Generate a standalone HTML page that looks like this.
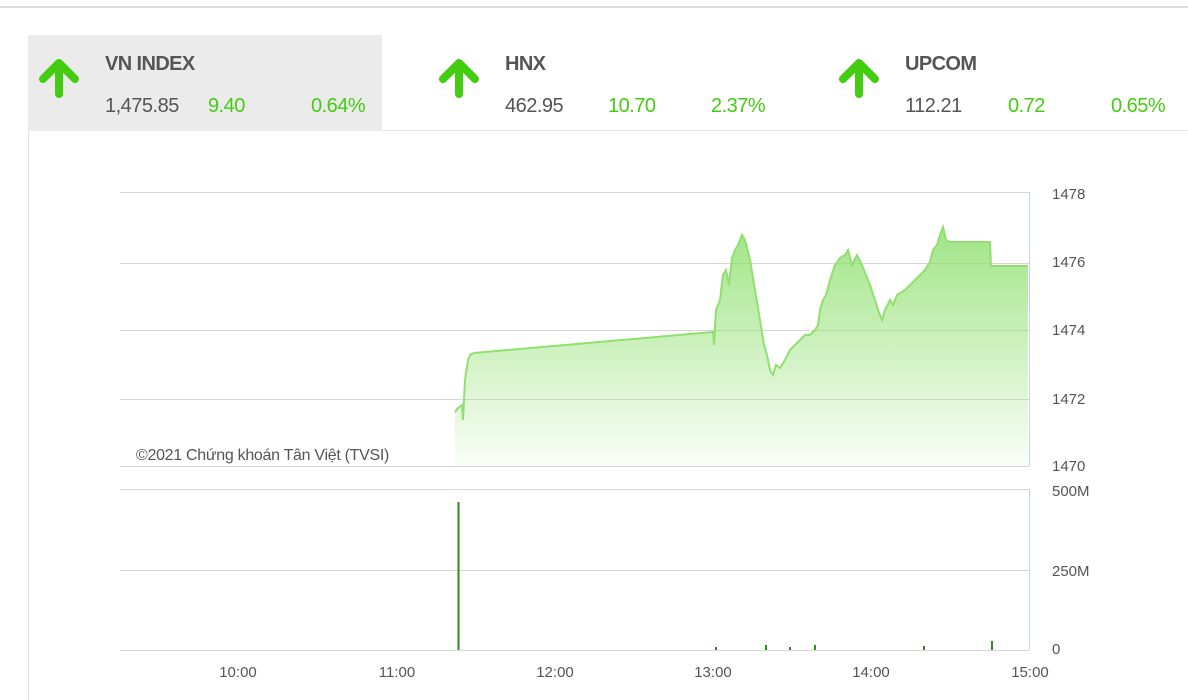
<!DOCTYPE html>
<html><head><meta charset="utf-8"><style>
html,body{margin:0;width:1188px;height:700px;background:#fff;font-family:"Liberation Sans",Arial,sans-serif;position:relative;overflow:hidden}
.top{position:absolute;left:0;top:6px;width:1188px;height:2px;background:#ddd}
.tab{position:absolute;top:35px;width:354px;height:96px}
.tab.a{background:#ebebeb}
.name{position:absolute;left:77px;top:18px;font-size:20px;font-weight:bold;color:#555;letter-spacing:-0.6px}
.v{position:absolute;top:60px;font-size:20px;color:#555;letter-spacing:-0.5px}
.g{color:#44cc11}
.panel{position:absolute;left:28px;top:130px;width:1170px;height:580px;border:1px solid #e4e4e4;box-sizing:border-box}
svg{position:absolute;left:0;top:0}
</style></head><body>
<div class="top"></div>
<div class="panel"></div>
<div class="tab a" style="left:28px">
<svg style="left:10px;top:24px" width="42" height="40" viewBox="0 0 42 40"><path d="M21 35V12" stroke="#44cc11" stroke-width="8" stroke-linecap="round"/><path d="M5 20L21 4L37 20" stroke="#44cc11" stroke-width="8" fill="none" stroke-linecap="round" stroke-linejoin="round"/></svg>
<div class="name">VN INDEX</div><div class="v" style="left:77px">1,475.85</div><div class="v g" style="left:180px">9.40</div><div class="v g" style="left:283px">0.64%</div></div>
<div class="tab" style="left:428px">
<svg style="left:10px;top:24px" width="42" height="40" viewBox="0 0 42 40"><path d="M21 35V12" stroke="#44cc11" stroke-width="8" stroke-linecap="round"/><path d="M5 20L21 4L37 20" stroke="#44cc11" stroke-width="8" fill="none" stroke-linecap="round" stroke-linejoin="round"/></svg>
<div class="name">HNX</div><div class="v" style="left:77px">462.95</div><div class="v g" style="left:180px">10.70</div><div class="v g" style="left:283px">2.37%</div></div>
<div class="tab" style="left:828px">
<svg style="left:10px;top:24px" width="42" height="40" viewBox="0 0 42 40"><path d="M21 35V12" stroke="#44cc11" stroke-width="8" stroke-linecap="round"/><path d="M5 20L21 4L37 20" stroke="#44cc11" stroke-width="8" fill="none" stroke-linecap="round" stroke-linejoin="round"/></svg>
<div class="name">UPCOM</div><div class="v" style="left:77px">112.21</div><div class="v g" style="left:180px">0.72</div><div class="v g" style="left:283px">0.65%</div></div>
<svg width="1188" height="700">
<defs><linearGradient id="gr" x1="0" y1="0" x2="0" y2="1"><stop offset="0" stop-color="#90e070" stop-opacity=".85"/><stop offset="1" stop-color="#90e070" stop-opacity=".05"/></linearGradient></defs>
<g stroke="#d6d6d6" stroke-width="1">
<line x1="120" y1="192.5" x2="1029" y2="192.5"/><line x1="120" y1="263.5" x2="1029" y2="263.5"/><line x1="120" y1="330.5" x2="1029" y2="330.5"/><line x1="120" y1="399.5" x2="1029" y2="399.5"/><line x1="120" y1="466.5" x2="1029" y2="466.5"/>
<line x1="120" y1="489.5" x2="1029" y2="489.5"/><line x1="120" y1="570.5" x2="1029" y2="570.5"/><line x1="120" y1="650.5" x2="1029" y2="650.5"/>
</g>
<g stroke="#c8d4e4"><line x1="1029.5" y1="192" x2="1029.5" y2="466"/><line x1="1029.5" y1="489" x2="1029.5" y2="650"/></g>
<path d="M455 466L455 412L458 408L462 405L463 420L465 380L468 360L470 355L474 353L713 332L714 345L716 310L720 300L723 275L726 270L729 285L732 258L735 250L738 245L742 235L745 240L750 260L755 290L760 320L764 345L767 355L770 370L773 375L776 365L780 368L785 360L790 350L795 345L800 340L805 335L810 335L815 330L818 325L820 310L823 300L826 295L830 280L835 265L840 258L845 255L848 250L852 265L857 255L862 265L866 275L870 285L875 300L878 310L882 320L885 310L890 300L893 305L897 295L905 290L910 285L915 280L920 275L925 270L928 265L930 262L933 250L937 245L940 235L943 227L946 240L950 242L990 242L991 266L1028 266L1028 466Z" fill="url(#gr)"/>
<path d="M455 412L458 408L462 405L463 420L465 380L468 360L470 355L474 353L713 332L714 345L716 310L720 300L723 275L726 270L729 285L732 258L735 250L738 245L742 235L745 240L750 260L755 290L760 320L764 345L767 355L770 370L773 375L776 365L780 368L785 360L790 350L795 345L800 340L805 335L810 335L815 330L818 325L820 310L823 300L826 295L830 280L835 265L840 258L845 255L848 250L852 265L857 255L862 265L866 275L870 285L875 300L878 310L882 320L885 310L890 300L893 305L897 295L905 290L910 285L915 280L920 275L925 270L928 265L930 262L933 250L937 245L940 235L943 227L946 240L950 242L990 242L991 266L1028 266" fill="none" stroke="#90e070" stroke-width="2"/>
<line x1="458.5" y1="502" x2="458.5" y2="650" stroke="#2e8b1e" stroke-width="2"/>
<g stroke="#2e8b1e" stroke-width="2"><line x1="716" y1="647" x2="716" y2="650"/><line x1="766" y1="645" x2="766" y2="650"/><line x1="815" y1="645" x2="815" y2="650"/><line x1="924" y1="646" x2="924" y2="650"/><line x1="992" y1="641" x2="992" y2="650"/><line x1="790" y1="647" x2="790" y2="650"/></g>
<g font-family="Liberation Sans,Arial,sans-serif" font-size="15" fill="#555">
<text x="1052" y="199">1478</text><text x="1052" y="267">1476</text><text x="1052" y="335">1474</text><text x="1052" y="404">1472</text><text x="1052" y="471">1470</text>
<text x="1052" y="496">500M</text><text x="1052" y="576">250M</text><text x="1052" y="654">0</text>
<g text-anchor="middle"><text x="238" y="677">10:00</text><text x="397" y="677">11:00</text><text x="555" y="677">12:00</text><text x="713" y="677">13:00</text><text x="871" y="677">14:00</text><text x="1030" y="677">15:00</text></g>
<text x="136" y="460" font-size="16" letter-spacing="-0.3">©2021 Chứng khoán Tân Việt (TVSI)</text>
</g>
</svg>
</body></html>
